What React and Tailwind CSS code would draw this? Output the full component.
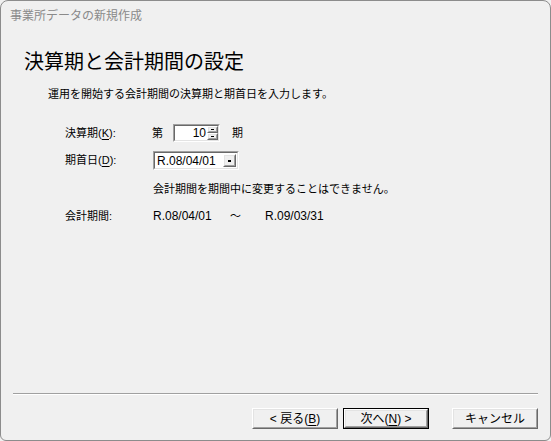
import React from 'react';

const font = { fontFamily: '"Liberation Sans", "Noto Sans CJK JP", sans-serif' };

const Ul = ({ children }) => <span className="underline underline-offset-2">{children}</span>;

const Sunken = ({ className = '', children }) => (
    <div className={`border border-t-[#a0a0a0] border-l-[#a0a0a0] border-b-white border-r-white ${className}`}>
        <div className="h-full border border-t-[#696969] border-l-[#696969] border-b-[#e3e3e3] border-r-[#e3e3e3] bg-white flex items-stretch">
            {children}
        </div>
    </div>
);

const Raised = ({ className = '', children }) => (
    <div className={`border border-t-white border-l-white border-b-[#696969] border-r-[#696969] bg-[#f0f0f0] ${className}`}>
        <div className="h-full border border-t-[#e3e3e3] border-l-[#e3e3e3] border-b-[#a0a0a0] border-r-[#a0a0a0] flex items-center justify-center">
            {children}
        </div>
    </div>
);

const WizButton = ({ label, isDefault }) => (
    <div className={`w-[86px] h-[21px] ${isDefault ? 'border border-black' : ''}`}>
        <Raised className="h-full">
            <span className="text-[12px] text-black leading-none">{label}</span>
        </Raised>
    </div>
);

const App = () => {
    return (
        <div className="w-[551px] h-[441px] bg-[#f0f0f0]" style={font}>
            <div className="w-full h-full border border-[#8c8c8c] rounded-t-[8px] rounded-b-[6px] flex flex-col overflow-hidden">
                {/* title bar */}
                <div className="h-[29px] flex items-center pl-[9px]">
                    <span className="text-[12px] text-[#8a8a8a]">事業所データの新規作成</span>
                </div>

                {/* header */}
                <div className="pl-[23px] mt-[20px] h-[24px] flex items-center">
                    <h1 className="text-[20px] text-black leading-none">決算期と会計期間の設定</h1>
                </div>
                <div className="pl-[47px] mt-[12px] h-[16px] flex items-center">
                    <p className="text-[11px] text-black">運用を開始する会計期間の決算期と期首日を入力します。</p>
                </div>

                {/* form */}
                <div className="mt-[22px] pl-[64px] flex flex-col text-[11px] text-black">
                    <div className="h-[18px] flex items-center">
                        <span className="w-[87px]">決算期(<Ul>K</Ul>):</span>
                        <span className="w-[21px]">第</span>
                        <Sunken className="w-[47px] h-[18px]">
                            <div className="flex-1 flex items-center justify-end pr-[1px] text-[12px] leading-none">10</div>
                            <div className="w-[11px] flex flex-col">
                                <Raised className="flex-1 border-t-[#e3e3e3] border-l-[#e3e3e3]">
                                    <span className="block w-[3px] h-[1px] bg-black" />
                                </Raised>
                                <Raised className="flex-1 border-t-[#e3e3e3] border-l-[#e3e3e3]">
                                    <span className="block w-[3px] h-[1px] bg-black" />
                                </Raised>
                            </div>
                        </Sunken>
                        <span className="ml-[12px]">期</span>
                    </div>

                    <div className="h-[19px] mt-[9px] flex items-center">
                        <span className="w-[88px]">期首日(<Ul>D</Ul>):</span>
                        <Sunken className="w-[86px] h-[19px]">
                            <div className="flex-1 flex items-center pl-[2px] text-[12px] leading-none">R.08/04/01</div>
                            <Raised className="w-[13px] m-[1px]">
                                <span className="block w-[3px] h-[2px] bg-black" />
                            </Raised>
                        </Sunken>
                    </div>

                    <div className="h-[16px] mt-[11px] flex items-center pl-[88px]">
                        会計期間を期間中に変更することはできません。
                    </div>

                    <div className="h-[16px] mt-[11px] flex items-center">
                        <span className="w-[88px]">会計期間:</span>
                        <span className="w-[77px] text-[12px]">R.08/04/01</span>
                        <span className="w-[35px]">～</span>
                        <span className="text-[12px]">R.09/03/31</span>
                    </div>
                </div>

                <div className="flex-1" />

                {/* divider */}
                <div className="mx-[12px] border-t border-[#a0a0a0] border-b border-b-white" />

                {/* buttons */}
                <div className="mt-[13px] mb-[11px] flex justify-end pr-[12px]">
                    <WizButton label={<>&lt; 戻る(<Ul>B</Ul>)</>} />
                    <div className="ml-[5px]">
                        <WizButton label={<>次へ(<Ul>N</Ul>) &gt;</>} isDefault />
                    </div>
                    <div className="ml-[23px]">
                        <WizButton label="キャンセル" />
                    </div>
                </div>
            </div>
        </div>
    );
};

export default App;
